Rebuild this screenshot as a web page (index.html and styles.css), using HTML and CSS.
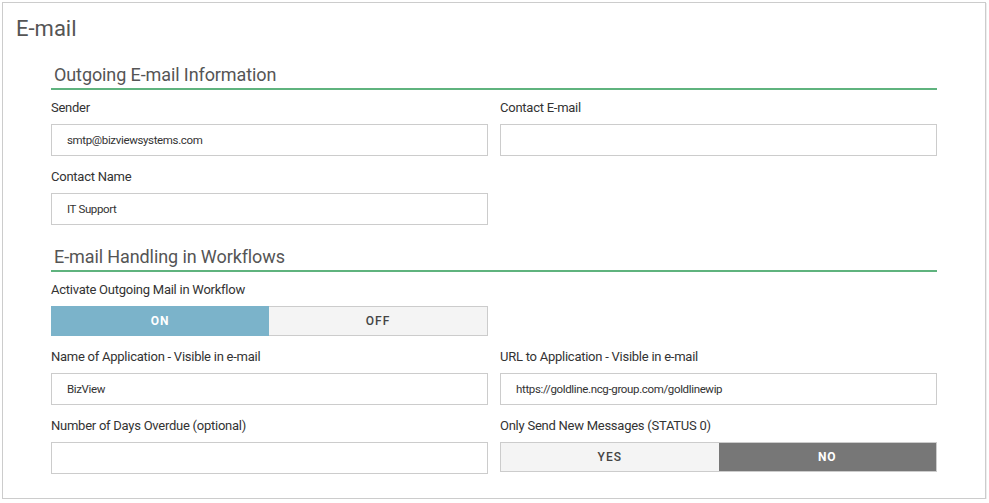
FILE: index.html
```html
<!DOCTYPE html>
<html>
    <head>
        <title>E-mail Settings</title>
        <link rel="stylesheet" href="styles.css">
    </head>
    <body>
        <div class="panel">
            <h1 class="title">E-mail</h1>

            <!-- Outgoing mail -->
            <div class="section">
                <h2 class="section-title">Outgoing E-mail Information</h2>
                <div class="form-grid">
                    <div class="field">
                        <label>Sender</label>
                        <div class="input">smtp@bizviewsystems.com</div>
                    </div>
                    <div class="field">
                        <label>Contact E-mail</label>
                        <div class="input"></div>
                    </div>
                    <div class="field">
                        <label>Contact Name</label>
                        <div class="input">IT Support</div>
                    </div>
                </div>
            </div>

            <!-- Workflow handling -->
            <div class="section">
                <h2 class="section-title">E-mail Handling in Workflows</h2>
                <div class="form-grid">
                    <div class="field">
                        <label>Activate Outgoing Mail in Workflow</label>
                        <div class="toggle">
                            <span class="opt on">ON</span>
                            <span class="opt">OFF</span>
                        </div>
                    </div>
                    <div class="field"></div>
                    <div class="field">
                        <label>Name of Application - Visible in e-mail</label>
                        <div class="input">BizView</div>
                    </div>
                    <div class="field">
                        <label>URL to Application - Visible in e-mail</label>
                        <div class="input">https://goldline.ncg-group.com/goldlinewip</div>
                    </div>
                    <div class="field">
                        <label>Number of Days Overdue (optional)</label>
                        <div class="input"></div>
                    </div>
                    <div class="field">
                        <label>Only Send New Messages (STATUS 0)</label>
                        <div class="toggle">
                            <span class="opt">YES</span>
                            <span class="opt off">NO</span>
                        </div>
                    </div>
                </div>
            </div>
        </div>
    </body>
</html>
```

FILE: styles.css
```css
/* Page */
body {
margin: 0;
padding: 2px 3px 0 2px;
font-family: Roboto, "Liberation Sans", sans-serif;
background-color: #fff;
}

/* Outer card */
.panel {
height: 497px;
box-sizing: border-box;
border: 1px solid #ccc;
box-shadow: 1px 1px 0 #eee;
padding: 13px 48px 0 48px;
}

.title {
margin: 0 0 22px -35px;
font-size: 22px;
line-height: 26px;
font-weight: normal;
color: #555;
}

.section {
margin-bottom: 21px;
}

.section-title {
margin: 0 0 10px 0;
padding: 0 0 2px 3px;
font-size: 18px;
line-height: 22px;
font-weight: normal;
letter-spacing: -0.1px;
color: #555;
border-bottom: 2px solid #5fb37e;
}

.form-grid {
display: grid;
grid-template-columns: 1fr 1fr;
column-gap: 12px;
row-gap: 13px;
}

.field label {
display: block;
font-size: 13px;
line-height: 16px;
letter-spacing: -0.25px;
color: #333;
margin-bottom: 8px;
}

.input {
height: 32px;
box-sizing: border-box;
border: 1px solid #ccc;
padding: 0 15px;
font-size: 11.5px;
letter-spacing: -0.35px;
line-height: 30px;
color: #333;
background-color: #fff;
}

/* Two-state switch */
.toggle {
display: flex;
height: 30px;
box-sizing: border-box;
border: 1px solid #ccc;
background-color: #f4f4f4;
}

.opt {
flex: 1;
text-align: center;
font-size: 12px;
line-height: 28px;
font-weight: 500;
letter-spacing: 1px;
color: #444;
}

.opt.on {
background-color: #7bb3ca;
color: #fff;
font-weight: bold;
margin: -1px 0 -1px -1px;
line-height: 30px;
}

.opt.off {
background-color: #777;
color: #fff;
font-weight: bold;
}
```
